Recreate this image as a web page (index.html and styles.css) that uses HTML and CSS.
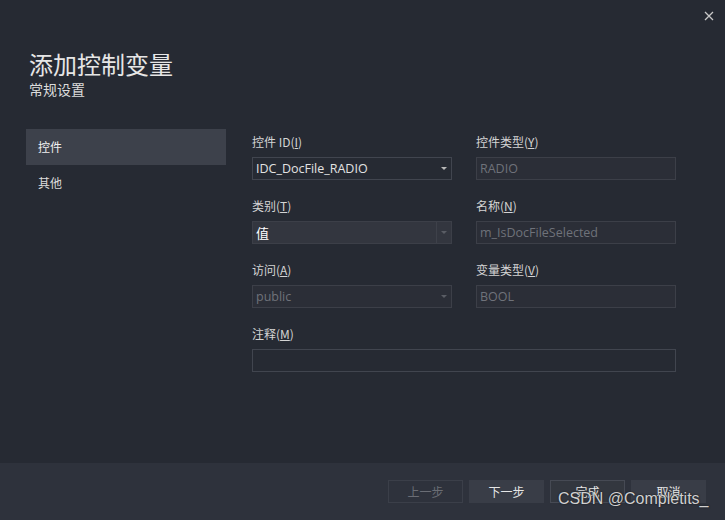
FILE: index.html
```html
<!DOCTYPE html>
<html lang="zh-CN">
<head>
    <meta charset="UTF-8">
    <title>添加控制变量</title>
    <link rel="stylesheet" href="styles.css">
</head>
<body>
    <div class="dialog">
        <button class="close" title="关闭">
            <svg width="10" height="10" viewBox="0 0 10 10"><path d="M1 1L9 9M9 1L1 9" stroke="#c8c8c8" stroke-width="1.3"/></svg>
        </button>

        <div class="main">
            <header class="header">
                <h1>添加控制变量</h1>
                <p>常规设置</p>
            </header>

            <div class="content">
                <ul class="nav">
                    <li class="active">控件</li>
                    <li>其他</li>
                </ul>

                <div class="form">
                    <div class="field">
                        <label>控件 ID(<u>I</u>)</label>
                        <div class="box combo">
                            <span>IDC_DocFile_RADIO</span>
                            <i class="arrow"></i>
                        </div>
                    </div>
                    <div class="field">
                        <label>控件类型(<u>Y</u>)</label>
                        <div class="box disabled"><span>RADIO</span></div>
                    </div>

                    <div class="field">
                        <label>类别(<u>T</u>)</label>
                        <div class="box combo filled">
                            <span>值</span>
                            <i class="arrow split"></i>
                        </div>
                    </div>
                    <div class="field">
                        <label>名称(<u>N</u>)</label>
                        <div class="box disabled"><span>m_IsDocFileSelected</span></div>
                    </div>

                    <div class="field">
                        <label>访问(<u>A</u>)</label>
                        <div class="box combo disabled">
                            <span>public</span>
                            <i class="arrow"></i>
                        </div>
                    </div>
                    <div class="field">
                        <label>变量类型(<u>V</u>)</label>
                        <div class="box disabled"><span>BOOL</span></div>
                    </div>

                    <div class="field wide">
                        <label>注释(<u>M</u>)</label>
                        <div class="box"></div>
                    </div>
                </div>
            </div>
        </div>

        <footer class="footer">
            <button class="btn off">上一步</button>
            <button class="btn">下一步</button>
            <button class="btn default">完成</button>
            <button class="btn">取消</button>
        </footer>

        <div class="watermark">CSDN @Completits_</div>
    </div>
</body>
</html>
```

FILE: styles.css
```css
body {
    margin: 0;
    background-color: #262a33;
    font-family: "Noto Sans CJK SC", "Open Sans", sans-serif;
    color: #d4d4d4;
}
.dialog {
    position: relative;
    width: 725px;
    height: 520px;
    display: flex;
    flex-direction: column;
    background-color: #262a33;
    overflow: hidden;
}
.close {
    position: absolute;
    top: 10px;
    right: 10px;
    width: 12px;
    height: 12px;
    padding: 0;
    border: none;
    background: none;
    display: flex;
    align-items: center;
    justify-content: center;
}
.main {
    height: 463px;
}
.header {
    padding: 50px 0 0 29px;
}
.header h1 {
    margin: 0;
    font-size: 24px;
    font-weight: normal;
    line-height: 28px;
    color: #e6e6e6;
}
.header p {
    margin: 2px 0 0;
    font-size: 14px;
    line-height: 18px;
    color: #dcdcdc;
}
.content {
    display: flex;
    align-items: flex-start;
    margin-top: 31px;
}
.nav {
    list-style: none;
    margin: 0 0 0 26px;
    padding: 0;
    width: 200px;
}
.nav li {
    height: 36px;
    line-height: 36px;
    padding-left: 12px;
    font-size: 12px;
    color: #dcdcdc;
}
.nav li.active {
    background-color: #3d414b;
    color: #f0f0f0;
}
.form {
    display: grid;
    grid-template-columns: 200px 200px;
    column-gap: 24px;
    row-gap: 18px;
    margin: 5px 0 0 26px;
}
.field label {
    display: block;
    height: 16px;
    line-height: 16px;
    margin-bottom: 7px;
    font-size: 12px;
    color: #d4d4d4;
}
.field.wide {
    grid-column: 1 / 3;
}
.box {
    box-sizing: border-box;
    height: 23px;
    border: 1px solid #41454f;
    display: flex;
    align-items: center;
    padding-left: 3px;
    font-family: "Open Sans", "Noto Sans CJK SC", sans-serif;
    font-size: 12.5px;
    color: #e2e2e2;
}
.box span {
    flex: 1;
}
.box.disabled {
    background-color: #2b2e37;
    border-color: #3c3f48;
    color: #6f727a;
}
.box.filled {
    background-color: #33363f;
    border-color: #3c3f48;
    font-family: "Noto Sans CJK SC", sans-serif;
    font-size: 13px;
    color: #ffffff;
}
.arrow {
    width: 14px;
    height: 21px;
    display: flex;
    align-items: center;
    justify-content: center;
}
.arrow::after {
    content: "";
    border-left: 3px solid transparent;
    border-right: 3px solid transparent;
    border-top: 3px solid #b8b8b8;
}
.arrow.split {
    border-left: 1px solid #3e414a;
}
.arrow.split::after,
.disabled .arrow::after {
    border-top-color: #5a5d65;
}
.footer {
    flex: 1;
    background-color: #2e323c;
    display: flex;
    justify-content: flex-end;
    align-items: flex-start;
    gap: 6px;
    padding: 17px 19px 0 0;
}
.btn {
    box-sizing: border-box;
    width: 75px;
    height: 23px;
    border: 1px solid transparent;
    background-color: #393d47;
    color: #e6e6e6;
    font-family: "Noto Sans CJK SC", sans-serif;
    font-size: 12px;
    padding: 0;
}
.btn.off {
    background-color: transparent;
    border-color: #3b3f49;
    color: #6a6d75;
}
.btn.default {
    background-color: #33373f;
    border-color: #464a54;
}
.watermark {
    position: absolute;
    left: 558px;
    top: 490px;
    font-family: "Liberation Sans", sans-serif;
    font-size: 16px;
    color: #d0d0d0;
    text-shadow: 0 0 2px #1c1e24, 0 0 1px #1c1e24;
    white-space: nowrap;
}
```
